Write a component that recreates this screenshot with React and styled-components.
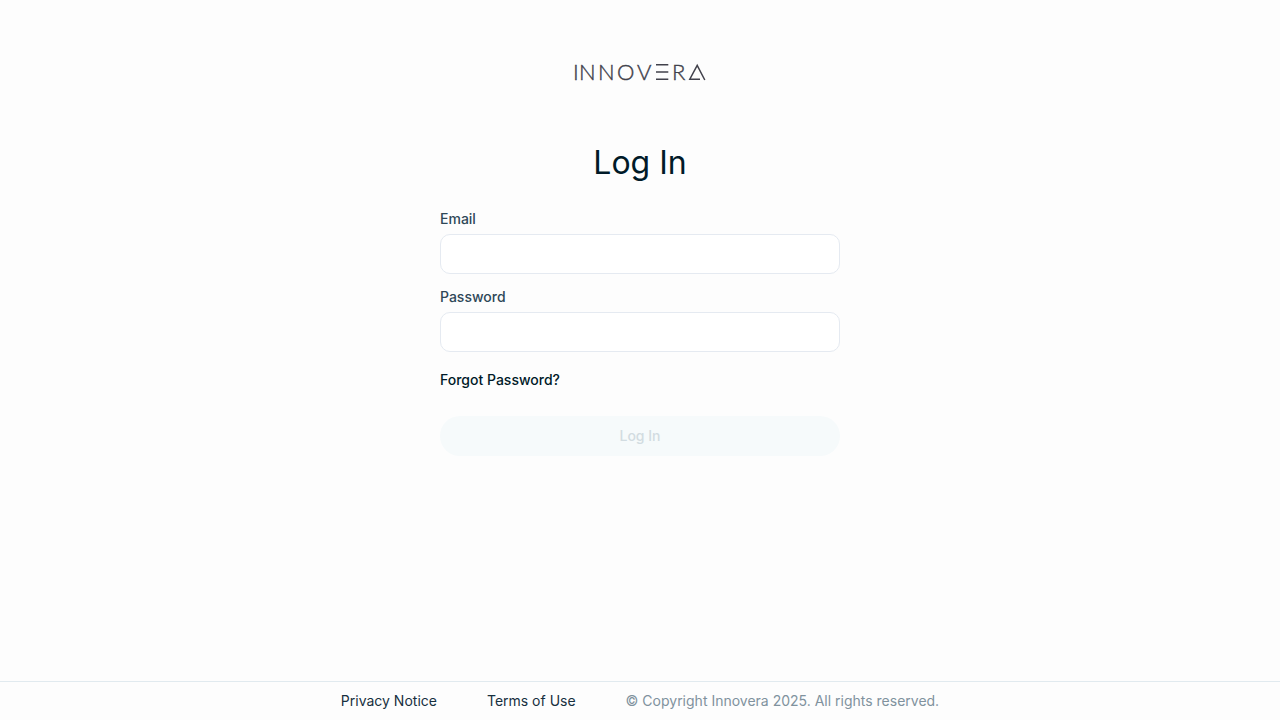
import React, { useState } from "react";
import styled, { createGlobalStyle } from "styled-components";

const GlobalStyle = createGlobalStyle`
  *, *::before, *::after { box-sizing: border-box; }
  body {
    margin: 0;
    background: #fdfdfd;
    color: #001a28;
    font-family: Inter, "Liberation Sans", sans-serif;
    font-size: 14px;
    line-height: 20px;
  }
`;

const Page = styled.div`
  min-height: 100vh;
  display: flex;
  flex-direction: column;
`;

const Main = styled.main`
  flex: 1;
  display: flex;
  flex-direction: column;
  align-items: center;
  padding: 52px 16px 40px;
`;

const Logo = styled.svg`
  display: block;
  width: 140px;
  height: 40px;
  overflow: visible;
  fill: #41414b;
  stroke: #41414b;
  stroke-width: 0.4;
  font-family: Lato, sans-serif;
  font-size: 22px;
  font-weight: 300;
`;

const LogoStroke = styled.path`
  fill: none;
  stroke-width: 1.5;
`;

const Title = styled.h1`
  margin: 51px 0 26px;
  font-size: 32px;
  line-height: 40px;
  font-weight: 400;
`;

const Form = styled.form`
  width: 100%;
  max-width: 400px;
  display: flex;
  flex-direction: column;
`;

const Field = styled.div`
  display: flex;
  flex-direction: column;
  gap: 5px;
  margin-bottom: 13px;
`;

const Label = styled.label`
  color: #2f4858;
  font-weight: 500;
`;

const Input = styled.input`
  height: 40px;
  padding: 0 12px;
  border: 1px solid #e5eaf1;
  border-radius: 10px;
  background: #fff;
  color: inherit;
  font: inherit;
`;

const ForgotLink = styled.a`
  align-self: flex-start;
  margin: 5px 0 26px;
  color: #001a28;
  font-weight: 500;
  text-decoration: none;
`;

const SubmitButton = styled.button`
  height: 40px;
  border: 0;
  border-radius: 20px;
  background: #f6fafb;
  color: #d2dce1;
  font: inherit;
  font-weight: 500;
`;

const Footer = styled.footer`
  display: flex;
  flex-wrap: wrap;
  justify-content: center;
  gap: 0 50px;
  padding: 9px 16px;
  border-top: 1px solid #e1eaef;
`;

const FooterLink = styled.a`
  color: #17303f;
  text-decoration: none;
`;

const Copyright = styled.span`
  color: #80929e;
`;

function InnoveraLogo() {
  return (
    <Logo viewBox="0 0 140 40" role="img" aria-label="Innovera">
      <text x="3" y="28">I</text>
      <text x="9" y="28">N</text>
      <text x="28" y="28">N</text>
      <text x="47" y="28">O</text>
      <text x="67" y="28">V</text>
      <LogoStroke d="M86 12.8H98.3M86 20H98.3M86 27.2H98.3" />
      <text x="102" y="28">R</text>
      <LogoStroke d="M134.8 28L127.2 13.3L119.8 27.2H130" />
    </Logo>
  );
}

export default function App() {
  const [email, setEmail] = useState("");
  const [password, setPassword] = useState("");

  return (
    <Page>
      <GlobalStyle />
      <Main>
        <InnoveraLogo />
        <Title>Log In</Title>
        <Form onSubmit={(e) => e.preventDefault()}>
          <Field>
            <Label htmlFor="email">Email</Label>
            <Input id="email" type="email" value={email} onChange={(e) => setEmail(e.target.value)} />
          </Field>
          <Field>
            <Label htmlFor="password">Password</Label>
            <Input id="password" type="password" value={password} onChange={(e) => setPassword(e.target.value)} />
          </Field>
          <ForgotLink href="#forgot">Forgot Password?</ForgotLink>
          <SubmitButton type="submit" disabled={!email || !password}>Log In</SubmitButton>
        </Form>
      </Main>
      <Footer>
        <FooterLink href="#privacy">Privacy Notice</FooterLink>
        <FooterLink href="#terms">Terms of Use</FooterLink>
        <Copyright>© Copyright Innovera 2025. All rights reserved.</Copyright>
      </Footer>
    </Page>
  );
}
